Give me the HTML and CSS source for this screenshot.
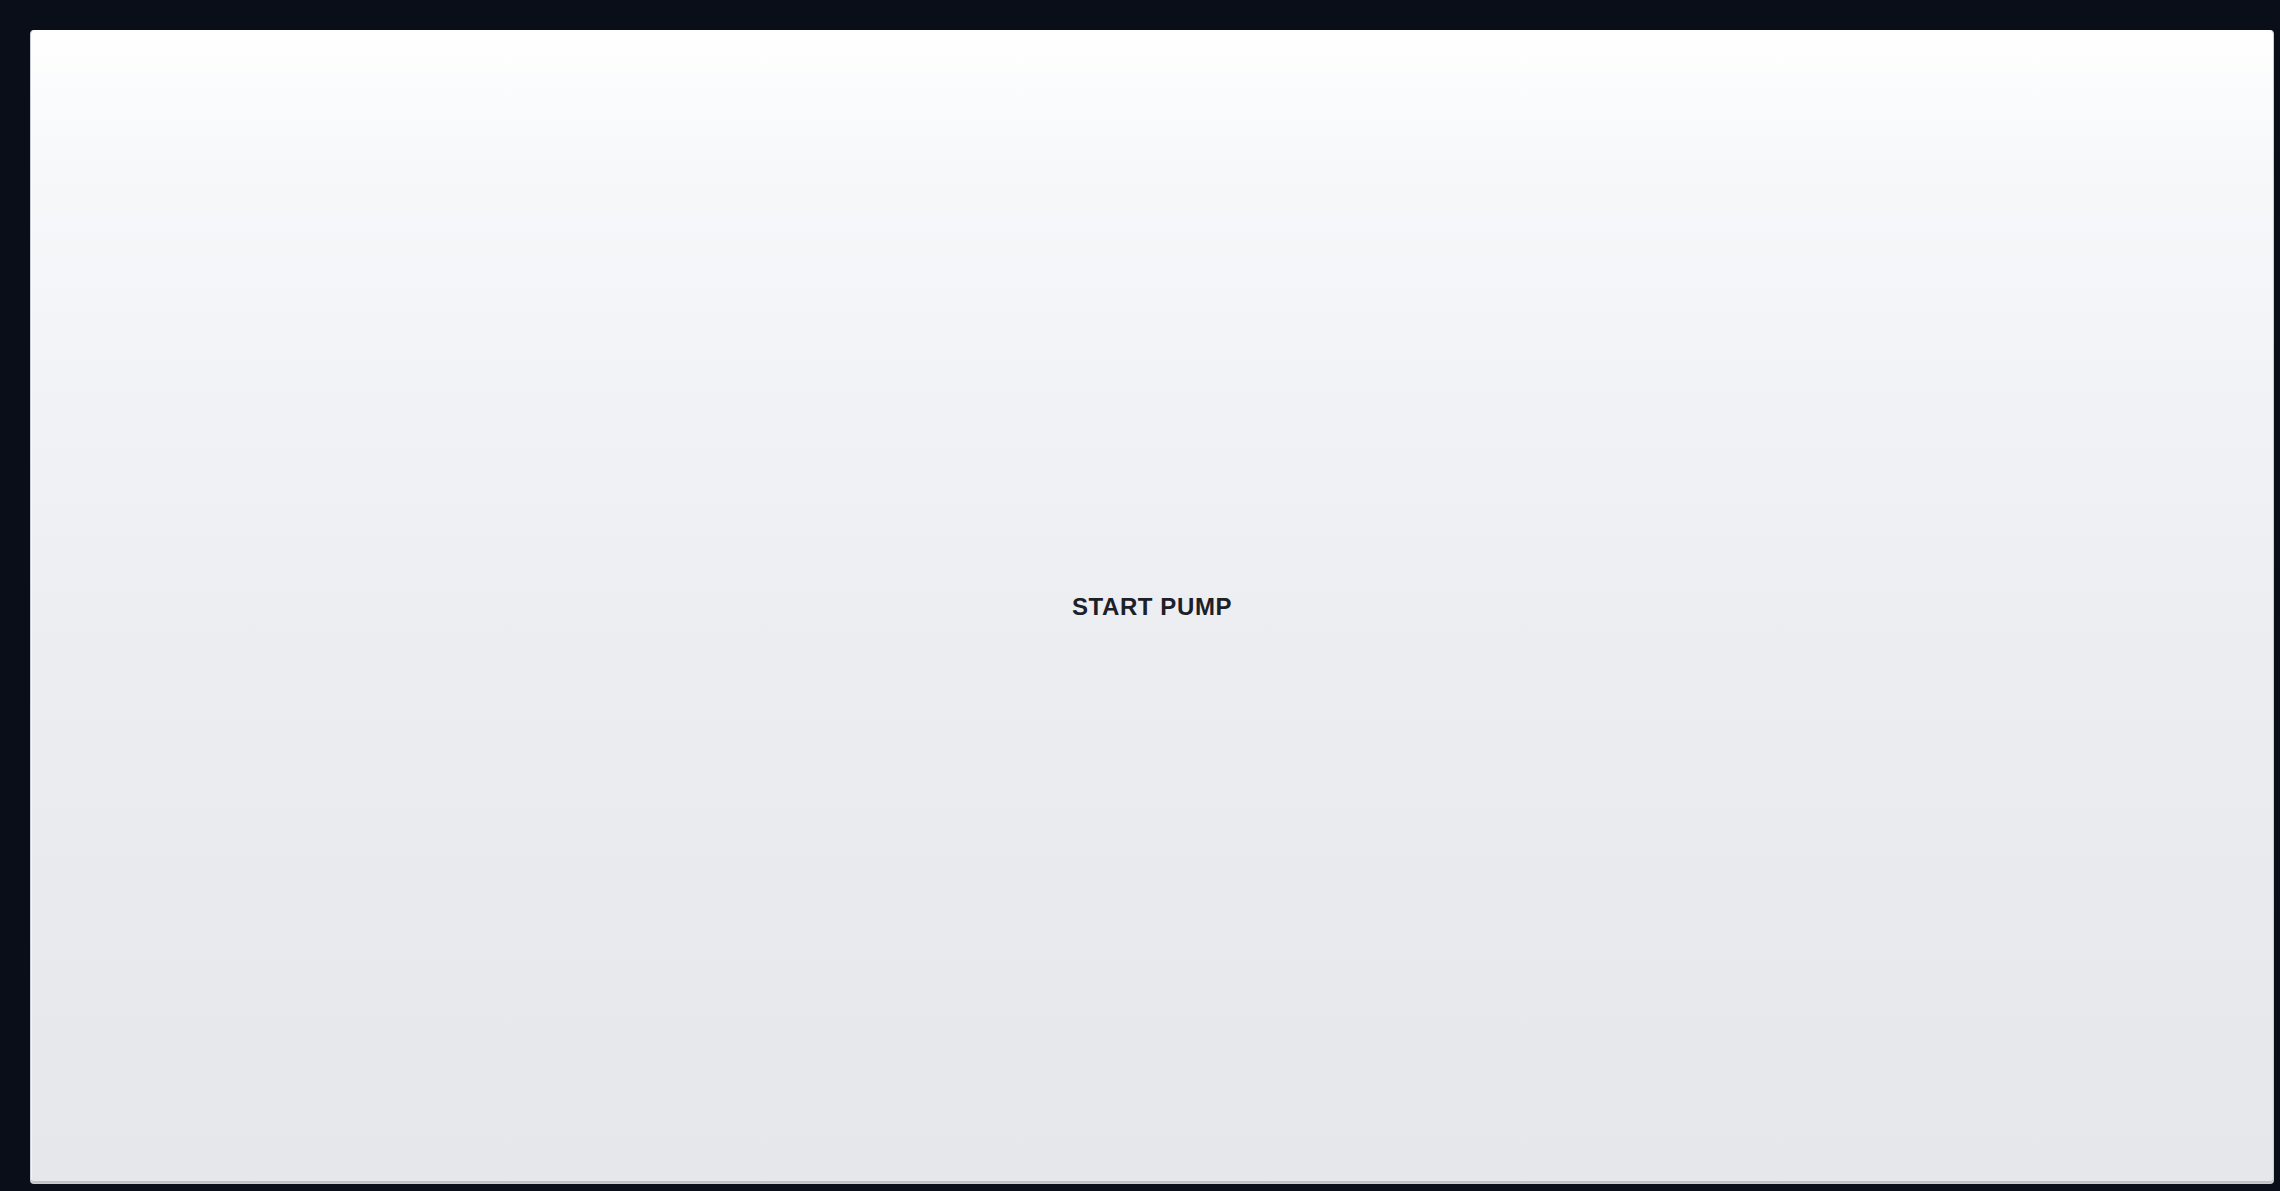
FILE: index.html
```html
<!DOCTYPE html>
<html>
<head>
<meta charset="utf-8">
<link rel="stylesheet" href="styles.css">
</head>
<body>
<main class="stage">
  <button class="pump-btn" type="button">START PUMP</button>
</main>
</body>
</html>
```

FILE: styles.css
```css
html, body {
  margin: 0;
  padding: 0;
  height: 100%;
  background: #0a0e18;
}
.stage {
  box-sizing: border-box;
  height: 100vh;
  padding: 30px 6px 7px 30px;
  display: flex;
}
.pump-btn {
  flex: 1;
  margin: 0;
  border: 1px solid #c9ccd3;
  border-top-color: #ffffff;
  border-radius: 4px;
  background: linear-gradient(to bottom, #ffffff 0%, #fafbfc 6%, #f7f8fa 12%, #f1f3f6 30%, #eceef2 50%, #e9eaee 75%, #e6e7eb 100%);
  box-shadow: inset 0 -2px 0 rgba(120, 126, 138, 0.35), inset 1px 0 0 rgba(255,255,255,0.6);
  font-family: "Liberation Sans", Arial, sans-serif;
  font-weight: 700;
  font-size: 24px;
  letter-spacing: 0.6px;
  color: #1c2028;
  cursor: pointer;
}
```
